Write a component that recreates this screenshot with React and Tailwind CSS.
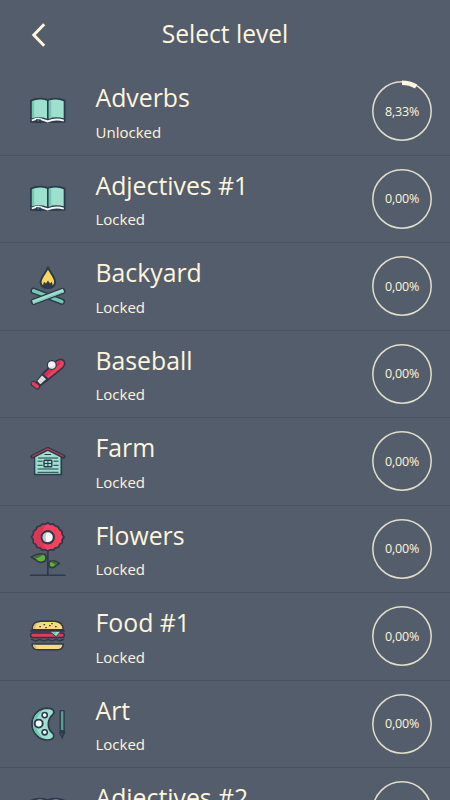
const INK = "#2b3a4c";
const MINT = "#9ce0cd";
const TEAL = "#72c9b1";

function BookIcon() {
    return (
        <svg viewBox="0 -4 60 60" className="h-[60px] w-[60px]">
            <path d="M10.8 15.3Q19 11.8 27.8 14.8Q36.5 11.8 44.8 15.3V37H10.8Z" fill={INK} stroke={INK} strokeWidth="1.3" strokeLinejoin="round" />
            <path d="M11.9 16.2Q19.5 13 27 15.8V33.7Q20 31.2 11.9 33.3Z" fill={MINT} />
            <path d="M28.8 15.8Q36.5 13 43.7 16.2V33.3Q35.5 31.2 28.8 33.7Z" fill={MINT} />
            <path d="M11.9 16.2L14.2 15.4V32.8L11.9 33.3ZM28.8 15.8L31.2 15.1V32.8L28.8 33.7Z" fill={TEAL} />
            <path d="M11.8 35.5Q17 32.8 21.5 34.3L27.8 36.4Q35.5 33.2 43.8 35.6" fill="none" stroke="#f6f7f8" strokeWidth="1.9" />
            <path d="M16.7 34V38.2L18.5 36.8L20.4 38.3V34.5" fill={INK} stroke={INK} strokeWidth=".8" />
            <path d="M18.2 34.3V36.5" stroke="#aab4bc" strokeWidth=".7" />
        </svg>
    )
}

function CampfireIcon() {
    return (
        <svg viewBox="0 -4 60 60" className="h-[60px] w-[60px]">
            <path d="M28 7.3C29.3 12 35.3 17 35.1 22.3C34.8 25.5 32.5 28 28 28.1C23.5 28 20.9 25.5 20.6 22.3C20.7 17 26.5 12.5 28 7.3Z" fill="#f9d75f" stroke={INK} strokeWidth="2" strokeLinejoin="round" />
            <path d="M22.8 26.3L23.9 21.8L26 23.5L28 20.4L30 23.5L31.9 21.8L32.9 26.3L30.5 28H25Z" fill={INK} />
            <path d="M13.5 30.8L42 41.7" stroke={INK} strokeWidth="6.3" strokeLinecap="round" />
            <path d="M13.7 30.9L41.8 41.6" stroke={TEAL} strokeWidth="3.6" strokeLinecap="round" />
            <path d="M13.8 41.8L42.4 31" stroke={INK} strokeWidth="6.3" strokeLinecap="round" />
            <path d="M14.4 41.6L41.8 31.2" stroke={MINT} strokeWidth="3.8" strokeLinecap="square" />
            <path d="M13.8 42.9L42.3 32.1" stroke={TEAL} strokeWidth="1" />
        </svg>
    )
}

function BaseballIcon() {
    return (
        <svg viewBox="0 -6.5 60 60" className="h-[60px] w-[60px]">
            <path d="M13.6 33.3L17.3 36" stroke={INK} strokeWidth="6" strokeLinecap="round" />
            <path d="M15.5 32.3L24 21.5L36.5 10.2Q40.8 7 43.8 10Q46.3 13.3 42.8 17.2L29.2 28.6L19 36Z" fill={INK} stroke={INK} strokeWidth="1.3" strokeLinejoin="round" />
            <path d="M24.1 23.4L37.2 11Q40.8 8.5 43.1 10.8Q45 13.3 42.3 16.5L28.4 27.8Z" fill="#f13f5d" />
            <path d="M36 13.5L40.8 9.6L40.2 13.5L26 26.2L24.1 23.4Z" fill="#d92e4d" />
            <path d="M17.4 30.6L22 25L26 28.8L20.3 33.7Z" fill="#e6e1df" />
            <path d="M20.6 27.2L23.9 30.3M18.9 29.2L22 32" stroke="#c3bfbf" strokeWidth=".7" />
            <path d="M13.4 33.1L17.2 36" stroke="#ec3957" strokeWidth="3.6" strokeLinecap="round" />
            <circle cx="31.8" cy="14.5" r="5" fill={INK} />
            <circle cx="31.8" cy="14.5" r="3.8" fill="#f5f5f5" />
            <path d="M29.2 17.1Q32.8 18.3 34.9 15.2" fill="none" stroke="#d9d7d5" strokeWidth="1" />
        </svg>
    )
}

function BarnIcon() {
    return (
        <svg viewBox="0 -4 60 60" className="h-[60px] w-[60px]">
            <path d="M14.8 21L27.8 14.2L41.3 21V39.5H14.8Z" fill={MINT} stroke={INK} strokeWidth="1.7" strokeLinejoin="round" />
            <path d="M15.8 21V38.4" stroke={TEAL} strokeWidth="1" />
            <path d="M24.6 19.5H31M18 23H38M17.5 26.2H22.5M33.5 26.2H38.5M17.5 30.3H22.5M33.5 30.3H38.5M17.5 34H38.5M17.5 37.3H38.5" stroke={INK} strokeWidth="1" />
            <rect x="24" y="25.2" width="7.8" height="6.5" rx=".8" fill={MINT} stroke={INK} strokeWidth="1.4" />
            <path d="M27.9 25V32M24 28.5H32" stroke={INK} strokeWidth="1" />
            <path d="M12 21.7L27.8 13.8L43.8 21.7" fill="none" stroke={INK} strokeWidth="3.8" strokeLinecap="round" strokeLinejoin="round" />
            <path d="M12.2 21.5L27.8 13.7L43.6 21.5" fill="none" stroke="#c93852" strokeWidth="1.3" />
        </svg>
    )
}

function FlowerIcon() {
    return (
        <svg viewBox="0 4 60 60" className="h-[60px] w-[60px]">
            <path d="M10.5 60.2H45" stroke={INK} strokeWidth="1.4" strokeLinecap="round" />
            <path d="M27.8 34V60" stroke={INK} strokeWidth="1.8" />
            <path d="M11.3 42Q18.5 37.7 24.5 39.3Q27.3 42 25 46Q19 49.4 15.5 44.5Q13.5 43.5 11.3 42Z" fill="#62b32f" stroke={INK} strokeWidth="1.6" strokeLinejoin="round" />
            <path d="M12.5 42Q18 38.8 23 40L17.5 43L14.8 43.2Z" fill="#46683d" />
            <path d="M39.4 48.5Q34.5 44.7 30.2 46.2Q28 48.4 29.5 51.8Q33.5 54 35.8 50.5Z" fill="#62b32f" stroke={INK} strokeWidth="1.6" strokeLinejoin="round" />
            <path d="M31 47.1Q35 46.2 38 48.5L35 49.5Z" fill="#43663f" />
            <path d="M27.8 7.5Q30 10.3 33 8.8Q34.8 11.8 38.2 11.5Q38.9 15 42 16.2Q41.4 19.4 44.2 22Q41.5 24.4 42.2 27.8Q39 29 38.5 32.4Q35.1 32.1 33.3 35.2Q30.2 33.7 27.8 36.2Q25.4 33.7 22.3 35.2Q20.5 32.1 17.1 32.4Q16.6 29 13.4 27.8Q14.1 24.4 11.4 22Q14.2 19.4 13.6 16.2Q16.7 15 17.4 11.5Q20.8 11.8 22.6 8.8Q25.6 10.3 27.8 7.5Z" fill="#f5435f" stroke={INK} strokeWidth="1.7" strokeLinejoin="round" />
            <path d="M25.5 9.8L22.8 9.9Q21 12.5 18.2 12.6Q17.5 15.7 14.6 17Q15 20 12.7 22Q15 24.5 14.6 27.2Q17.4 28.2 18 31.2Q21.3 31.1 22.9 33.9L25.8 33.4Q18 22 25.5 9.8Z" fill="#d93753" />
            <circle cx="27.8" cy="22.3" r="6.1" fill="#f7f7f7" stroke={INK} strokeWidth="2.2" />
            <path d="M26.5 17.4A5 5 0 0 0 26.5 27.2A14 14 0 0 1 26.5 17.4Z" fill="#c8c8c8" />
        </svg>
    )
}

function BurgerIcon() {
    return (
        <svg viewBox="0 -4 60 60" className="h-[60px] w-[60px]">
            <path d="M12.2 19.8Q12.1 11.6 21 11.2H34.5Q43.2 11.7 43.2 19.8Z" fill="#ffda78" stroke={INK} strokeWidth="1.5" strokeLinejoin="round" />
            <path d="M12.9 19Q12.9 13.6 17.9 12.4Q15.4 15.2 15.5 19Z" fill="#e7b95f" />
            <path d="M20.1 16V17.3M24.3 14V15.3M26 16.9V18.2M29.8 15V16.3M32 13V14.3M35.8 16V17.3" stroke={INK} strokeWidth="1.6" />
            <rect x="10.5" y="23" width="33.8" height="4.5" rx="2.2" fill="#ee3653" stroke={INK} strokeWidth="1.5" />
            <path d="M11 20.9H44" stroke={INK} strokeWidth="1.8" strokeLinecap="round" />
            <path d="M29.7 21.2H41.1L36.1 26.7Z" fill={MINT} stroke={INK} strokeWidth="1" />
            <path d="M31 21.9H36L35 25Z" fill={TEAL} />
            <path d="M10.8 29.4Q12.8 29.4 14 30.5Q16 31.8 18 30.1Q20 28.7 22 30.3Q24 31.7 26 30.2Q28 28.8 30 30.2Q32 31.6 34 30.2Q36 28.8 38 30.2Q40 31.6 42 29.8L44.3 29.4" fill="none" stroke={INK} strokeWidth="1.4" />
            <path d="M12.1 34H43.2Q43 39.6 37.7 39.8H17.8Q12.3 39.6 12.1 34Z" fill="#ffda78" stroke={INK} strokeWidth="1.5" strokeLinejoin="round" />
            <path d="M12.9 34.7H15.5Q16 38.2 18.9 39H17Q13.4 38.5 12.9 34.7Z" fill="#e7b95f" />
        </svg>
    )
}

function PaletteIcon() {
    return (
        <svg viewBox="0 -6.5 60 60" className="h-[60px] w-[60px]">
            <path d="M27.5 7.6C18.5 7.8 12 14.8 12 23.2C12 32 18.5 39.3 27.3 39.5C33 39.6 34.7 36.5 33.4 33.6C29.3 30.2 28.2 26.8 28.3 23.5C28.2 20.3 29.4 16.9 33.4 13.3C34.8 10.5 33 7.6 27.5 7.6Z" fill={MINT} stroke={INK} strokeWidth="1.7" strokeLinejoin="round" />
            <path d="M23.5 9.2C16.7 11.4 13 16.8 13 23.3C13 30 16.8 35.7 23.4 37.9C14 30 14 17 23.5 9.2Z" fill={TEAL} />
            <circle cx="24.7" cy="14.6" r="2.6" fill="#fff" stroke={INK} strokeWidth="1.6" />
            <circle cx="18.7" cy="23.1" r="4" fill="#fff" stroke={INK} strokeWidth="1.9" />
            <circle cx="24.7" cy="31.8" r="2.6" fill="#fff" stroke={INK} strokeWidth="1.6" />
            <rect x="40.2" y="10.1" width="3.9" height="20" rx=".6" fill="#589d91" stroke={INK} strokeWidth="1.4" />
            <path d="M39.8 29.5H44.5Q46.3 32.4 43.5 35.6L42.2 39.2L40.8 35.6Q38 32.4 39.8 29.5Z" fill={INK} />
            <path d="M40.9 32.3Q41.7 34 43 34.5" fill="none" stroke="#526470" strokeWidth=".8" />
        </svg>
    )
}

const levels = [
    { name: "Adverbs", status: "Unlocked", progress: 8.33, icon: BookIcon },
    { name: "Adjectives #1", status: "Locked", progress: 0, icon: BookIcon },
    { name: "Backyard", status: "Locked", progress: 0, icon: CampfireIcon },
    { name: "Baseball", status: "Locked", progress: 0, icon: BaseballIcon },
    { name: "Farm", status: "Locked", progress: 0, icon: BarnIcon },
    { name: "Flowers", status: "Locked", progress: 0, icon: FlowerIcon },
    { name: "Food #1", status: "Locked", progress: 0, icon: BurgerIcon },
    { name: "Art", status: "Locked", progress: 0, icon: PaletteIcon },
    { name: "Adjectives #2", status: "Locked", progress: 0, icon: BookIcon },
];

function ProgressRing({ value }) {
    return (
        <div className="grid h-[62px] w-[62px] shrink-0 place-items-center">
            <svg viewBox="0 0 62 62" className="col-start-1 row-start-1 h-[62px] w-[62px]">
                <circle cx="31" cy="31" r="29.2" fill="none" stroke="#e3dec9" strokeWidth="1.5" />
                {value > 0 && (
                    <circle
                        cx="31"
                        cy="31"
                        r="28.3"
                        fill="none"
                        stroke="#fff5dc"
                        strokeWidth="4.4"
                        pathLength="100"
                        strokeDasharray={`${value} 100`}
                        transform="rotate(-90 31 31)"
                    />
                )}
            </svg>
            <span className="col-start-1 row-start-1 pt-px text-[12.5px] leading-none tracking-[-0.2px]">
                {value.toFixed(2).replace(".", ",")}%
            </span>
        </div>
    )
}

function LevelRow({ level }) {
    const Icon = level.icon;
    return (
        <li className="flex h-[87.5px] shrink-0 items-center border-b border-[#4a5362] pr-[17px] pl-5">
            <Icon />
            <div className="ml-[15.5px] flex-1">
                <h2 className="-mt-px text-[24.8px] leading-[34px]">{level.name}</h2>
                <p className="mt-[7.5px] text-[15px] leading-5">{level.status}</p>
            </div>
            <ProgressRing value={level.progress} />
        </li>
    )
}

export default function App() {
    return (
        <div className="flex h-[800px] w-[450px] flex-col overflow-hidden bg-[#545d6b] font-['Open_Sans','Noto_Sans',sans-serif] text-[#fff5dc]">
            {/* Top bar */}
            <header className="grid h-[68px] shrink-0 grid-cols-[60px_1fr_60px] items-center">
                <button className="pt-0.5 pl-[31px]" aria-label="Back">
                    <svg viewBox="0 0 16 24" className="h-6 w-4">
                        <path d="M13.2 1.2L2.8 12L13.2 22.8" fill="none" stroke="#fff5dc" strokeWidth="3" />
                    </svg>
                </button>
                <h1 className="text-center text-[24.6px] leading-[34px]">Select level</h1>
            </header>

            {/* Level list */}
            <ul className="flex flex-col">
                {levels.map((level) => (
                    <LevelRow key={level.name} level={level} />
                ))}
            </ul>
        </div>
    )
}
